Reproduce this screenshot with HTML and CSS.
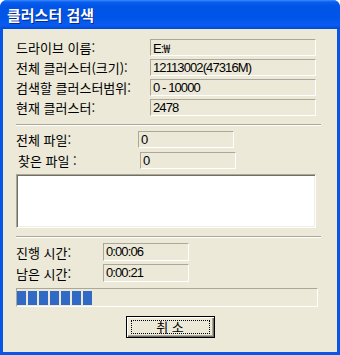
FILE: index.html
```html
<!DOCTYPE html>
<html lang="ko">
<head>
<meta charset="utf-8">
<title>클러스터 검색</title>
<link rel="stylesheet" href="styles.css">
</head>
<body>
<div class="window">
  <div class="titlebar"><span class="title">클러스터 검색</span></div>
  <div class="content">
    <div class="info">
      <div class="row"><span class="label">드라이브 이름:</span><span class="field">E:<span class="won">₩</span></span></div>
      <div class="row"><span class="label">전체 클러스터(크기):</span><span class="field">12113002(47316M)</span></div>
      <div class="row"><span class="label">검색할 클러스터범위:</span><span class="field">0 - 10000</span></div>
      <div class="row"><span class="label">현재 클러스터:</span><span class="field">2478</span></div>
    </div>
    <div class="sep sep-top"></div>
    <div class="files">
      <div class="row"><span class="label">전체 파일:</span><span class="field">0</span></div>
      <div class="row"><span class="label indent">찾은 파일 :</span><span class="field">0</span></div>
    </div>
    <div class="listbox"></div>
    <div class="sep sep-bottom"></div>
    <div class="times">
      <div class="row"><span class="label">진행 시간:</span><span class="field">0:00:06</span></div>
      <div class="row"><span class="label">남은 시간:</span><span class="field">0:00:21</span></div>
    </div>
    <div class="progress">
      <span class="block"></span><span class="block"></span><span class="block"></span><span class="block"></span><span class="block"></span><span class="block"></span><span class="block"></span>
    </div>
    <div class="buttons">
      <button class="btn" type="button"><span class="focus">취 소</span></button>
    </div>
  </div>
</div>
</body>
</html>
```

FILE: styles.css
```css
html, body {
  margin: 0;
  padding: 0;
  background: #ffffff;
}

.window {
  width: 340px;
  height: 355px;
  box-sizing: border-box;
  display: flex;
  flex-direction: column;
  border-radius: 7px 7px 0 0;
  overflow: hidden;
  background: #0a55e6;
  font-family: "Liberation Sans", "Noto Sans CJK KR", sans-serif;
  font-size: 12px;
  color: #000;
}

.titlebar {
  height: 29px;
  flex: none;
  display: flex;
  align-items: center;
  padding-left: 7px;
  background: linear-gradient(to bottom, #3d8cff 0px, #0a5ff0 2px, #0054e6 6px, #0055e8 18px, #0a5cf0 25px, #0049d6 29px);
}

.title {
  font-family: "Noto Sans CJK KR", sans-serif;
  font-weight: bold;
  font-size: 15px;
  color: #ffffff;
  text-shadow: 1px 1px 0 #0b2a8c;
  line-height: 1;
  margin-top: -1px;
}

.content {
  flex: 1;
  margin: 0 3px 3px 3px;
  background: #ece9d8;
  padding: 10px 0 0 13px;
  display: flex;
  flex-direction: column;
}

.label {
  font-family: "Noto Sans CJK KR", sans-serif;
  font-size: 13px;
  line-height: 17px;
  white-space: nowrap;
}

.label.indent {
  padding-left: 2px;
}

.row {
  display: flex;
  align-items: center;
}

.field {
  box-sizing: border-box;
  height: 17px;
  border-top: 1px solid #aca899;
  border-left: 1px solid #aca899;
  border-right: 1px solid #ffffff;
  border-bottom: 1px solid #ffffff;
  padding-left: 2px;
  font-family: "Liberation Sans", "Noto Sans CJK KR", sans-serif;
  font-size: 13px;
  letter-spacing: -0.9px;
  line-height: 15px;
  white-space: nowrap;
  overflow: hidden;
}

.won {
  font-family: "Noto Sans CJK KR", sans-serif;
  font-size: 12px;
  letter-spacing: 0;
}

.info {
  display: flex;
  flex-direction: column;
  gap: 3px;
}

.info .label {
  width: 134px;
}

.info .field {
  width: 166px;
}

.sep {
  width: 305px;
  height: 2px;
  box-sizing: border-box;
  border-top: 1px solid #aca899;
  border-bottom: 1px solid #ffffff;
}

.sep-top {
  margin-top: 8px;
}

.files {
  margin-top: 5px;
  display: flex;
  flex-direction: column;
  gap: 4px;
}

.files .label {
  width: 122px;
}

.files .field {
  width: 96px;
}

.listbox {
  margin-top: 5px;
  width: 300px;
  height: 54px;
  box-sizing: border-box;
  background: #ffffff;
  border-top: 1px solid #aca899;
  border-left: 1px solid #aca899;
  border-right: 1px solid #ffffff;
  border-bottom: 1px solid #ffffff;
  box-shadow: inset 1px 1px 0 #716f64, inset -1px -1px 0 #f1efe2;
}

.sep-bottom {
  margin-top: 8px;
}

.times {
  margin-top: 5px;
  display: flex;
  flex-direction: column;
  gap: 3px;
}

.times .label {
  width: 87px;
}

.times .field {
  width: 86px;
  height: 18px;
  line-height: 16px;
}

.progress {
  margin-top: 6px;
  width: 302px;
  height: 19px;
  box-sizing: border-box;
  border-top: 1px solid #aca899;
  border-left: 1px solid #aca899;
  border-right: 1px solid #ffffff;
  border-bottom: 1px solid #ffffff;
  padding: 2px 0 0 0;
  display: flex;
  gap: 2px;
}

.block {
  width: 9px;
  height: 14px;
  background: #316ac5;
}

.buttons {
  margin-top: 9px;
  margin-left: -13px;
  display: flex;
  justify-content: center;
}

.btn {
  width: 89px;
  height: 22px;
  box-sizing: border-box;
  padding: 0;
  margin: 0;
  background: #ece9d8;
  border: 1px solid #000000;
  box-shadow: inset 1px 1px 0 #ffffff, inset -1px -1px 0 #716f64, inset -2px -2px 0 #aca899;
  display: flex;
  align-items: center;
  justify-content: center;
  font-family: "Noto Sans CJK KR", sans-serif;
  font-size: 13px;
  color: #000;
}

.focus {
  box-sizing: border-box;
  width: 79px;
  height: 14px;
  border: 1px dotted #000000;
  display: flex;
  align-items: center;
  justify-content: center;
  line-height: 12px;
}
```
